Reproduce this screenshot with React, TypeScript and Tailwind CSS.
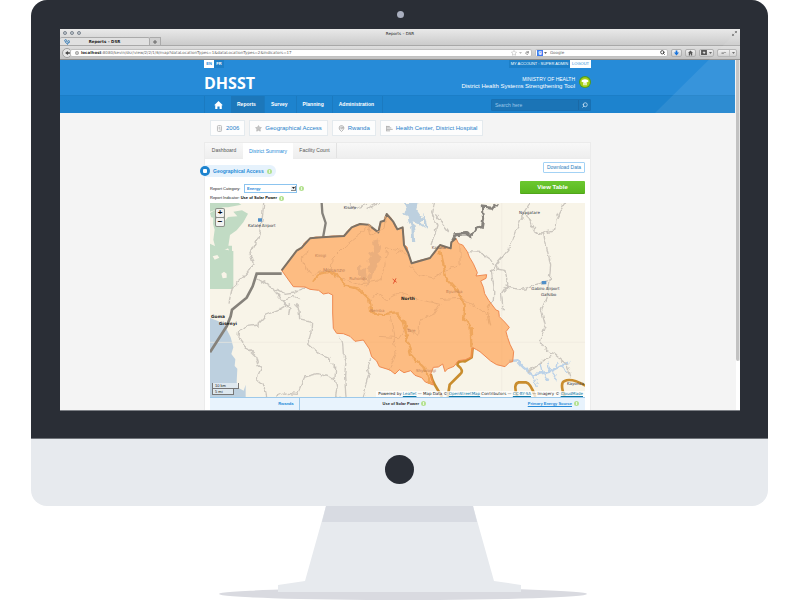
import React from "react";
import { Search, Star, MapPin } from "lucide-react";

const REGION =
  "M215 202 L232 180 L246 160 L260 143 L268 141 L275 134 L283 120 L300 106 L318 102 L335 103 L368 99 L402 99 L412 84 L425 73 L436 67 L450 63 L475 65 L488 78 L505 88 L508 70 L512 56 L523 53 L530 33 L541 42 L549 55 L556 73 L562 79 L578 73 L581 100 L582 126 L591 132 L595 151 L605 181 L630 172 L660 165 L674 150 L690 126 L706 134 L722 136 L724 118 L738 106 L746 122 L758 126 L772 146 L778 162 L790 182 L802 209 L798 219 L830 215 L828 226 L812 234 L820 253 L824 272 L836 292 L858 321 L866 324 L868 341 L884 357 L898 373 L888 386 L893 404 L900 424 L911 446 L908 476 L898 478 L885 491 L860 485 L842 474 L810 446 L800 440 L788 434 L785 463 L766 470 L745 473 L732 490 L712 498 L705 506 L698 483 L685 492 L670 493 L662 513 L668 535 L670 546 L646 537 L635 524 L615 517 L602 503 L582 509 L568 500 L555 513 L540 501 L508 491 L500 474 L485 461 L478 438 L460 411 L435 415 L420 400 L400 392 L380 391 L370 376 L368 330 L368 276 L355 270 L340 273 L326 262 L300 259 L285 252 L250 251 Z";

function Info() {
  return (
    <span className="flex h-[5px] w-[5px] shrink-0 items-center justify-center rounded-full bg-[#b4e191]">
      <span className="h-[3px] w-px bg-[#e8f8dc]" />
    </span>
  );
}

function ToolButton({ label, children }: { label: string; children: React.ReactNode }) {
  return (
    <button
      aria-label={label}
      className="flex h-2 items-center justify-center gap-[2px] rounded-[2px] border border-[#b0b0b0] bg-gradient-to-b from-[#f0f0f0] to-[#cfcfcf] px-[1px] text-[#666]"
    >
      {children}
    </button>
  );
}

function Caret() {
  return (
    <svg viewBox="0 0 6 4" className="h-[2px] w-[3px]">
      <path d="M0 0h6L3 4z" fill="currentColor" />
    </svg>
  );
}

function BrowserChrome() {
  return (
    <div className="bg-gradient-to-b from-[#e9e9e9] via-[#cccccc] to-[#c4c4c4] font-['DejaVu_Sans',sans-serif] text-[4px] leading-[5px] text-[#444]">
      <div className="grid h-2 grid-cols-[1fr_auto_1fr] items-center px-[3px]">
        <div className="flex gap-[3px]">
          {["Close", "Minimise", "Zoom"].map((n) => (
            <button key={n} aria-label={n} className="h-1 w-1 rounded-full border border-[#7d868f] bg-[#c3cad1]" />
          ))}
        </div>
        <span className="text-[#222]">Reports – DSR</span>
        <svg viewBox="0 0 12 12" className="h-[5px] w-[5px] justify-self-end" fill="none" stroke="#777" strokeWidth="2">
          <path d="M7 1h4v4M11 1L7 5M1 7v4h4M1 11l4-4" />
        </svg>
      </div>
      <div className="flex h-[9px] items-end border-b border-[#a8a8a8]">
        <div className="grid h-2 w-[90px] grid-cols-[1fr_auto_1fr] items-center rounded-t-[2px] border-r border-t border-[#aaa] bg-[#e0e0e0] px-1">
          <svg viewBox="0 0 18 18" className="h-[6px] w-[6px]" fill="none" stroke="#3d80b8" strokeWidth="3">
            <circle cx="5" cy="5" r="3" />
            <path d="M5 9c0 6 8 6 8 1" />
            <circle cx="14" cy="8" r="3" />
            <path d="M10 17l3-3" />
          </svg>
          <span className="font-bold text-[#222]">Reports – DSR</span>
        </div>
        <button aria-label="New tab" className="flex h-2 w-[11px] items-center justify-center border-r border-t border-[#aaa] bg-[#cfcfcf]">
          <svg viewBox="0 0 8 8" className="h-[4px] w-[4px]" stroke="#666" strokeWidth="2">
            <path d="M4 0v8M0 4h8" />
          </svg>
        </button>
      </div>
      <div className="flex h-[14px] items-center gap-[3px] border-b border-[#8b8b8b] bg-gradient-to-b from-[#dedede] to-[#c2c2c2] pl-[2px] pr-[3px]">
        <button aria-label="Back" className="-mr-[5px] flex h-[10px] w-[10px] items-center justify-center rounded-full border border-[#a0a0a0] bg-[#e6e6e6]">
          <svg viewBox="0 0 12 10" className="h-1 w-[5px]">
            <path d="M0 5L7 0v3h5v4H7v3z" fill="#444" />
          </svg>
        </button>
        <label className="flex h-[8px] flex-1 items-center rounded-[2px] border border-[#c0c0c0] bg-white pl-[4px] pr-[2px]">
          <svg viewBox="0 0 12 12" className="mr-[2px] h-1 w-1 shrink-0" fill="none" stroke="#999" strokeWidth="2">
            <circle cx="6" cy="6" r="5" />
            <path d="M1 6h10M6 1v10" />
          </svg>
          <span className="font-bold text-[#333]">localhost</span>
          <input
            aria-label="Address"
            className="min-w-0 flex-1 bg-transparent text-[#666] outline-none"
            defaultValue=":8080/kevin/dsr/view/2/2/1/6/map?dataLocationTypes=1&dataLocationTypes=2&indicators=17"
          />
          <Star className="mr-[2px] h-[6px] w-[6px] text-[#aaa]" />
          <span className="mr-[3px] flex text-[#bbb]"><Caret /></span>
          <svg viewBox="0 0 12 12" className="h-1 w-1" fill="none" stroke="#666" strokeWidth="2">
            <path d="M10 8A4 4 0 1 1 9 3M11 0v5H6" />
          </svg>
        </label>
        <label className="flex h-[8px] w-[133px] items-center rounded-[2px] border border-[#c0c0c0] bg-white px-[1px]">
          <span className="flex h-[6px] w-[6px] items-center justify-center bg-[#3f7bf0] text-[5px] font-bold text-white">g</span>
          <span className="mx-[1px] flex text-[#666]"><Caret /></span>
          <input aria-label="Web search" placeholder="Google" className="ml-[2px] min-w-0 flex-1 bg-transparent outline-none placeholder:text-[#666]" />
          <Search className="mr-[1px] h-[5px] w-[5px] text-[#333]" strokeWidth={4} />
        </label>
        <ToolButton label="Downloads">
          <svg viewBox="0 0 12 12" className="mx-[1px] h-[6px] w-[5px]"><path d="M4 0h4v5h4l-6 7-6-7h4z" fill="#1672dc" /></svg>
        </ToolButton>
        <ToolButton label="Home page">
          <svg viewBox="0 0 12 12" className="mx-[1px] h-[6px] w-[5px]"><path d="M6 0l6 6h-2v6H7V8H5v4H2V6H0z" fill="#555" /></svg>
        </ToolButton>
        <ToolButton label="Bookmarks">
          <svg viewBox="0 0 14 12" className="h-[5px] w-[6px]"><path fillRule="evenodd" d="M0 0h14v12H0zM7 2L6 5H3l3 2-1 3 2-2 3 2-1-3 2-2H8z" fill="#555" /></svg>
          <Caret />
        </ToolButton>
        <ToolButton label="Tools">
          <svg viewBox="0 0 14 10" className="ml-[1px] h-[4px] w-[7px]"><path d="M2 4h8V2l4 3H8v2H2z" fill="#777" /></svg>
          <span className="h-full w-px bg-[#bbb]" />
          <Caret />
        </ToolButton>
      </div>
    </div>
  );
}

function SiteHeader() {
  const nav = ["Reports", "Survey", "Planning", "Administration"];
  return (
    <header className="bg-[#268bd8] text-white">
      <div className="mx-auto w-[387px] max-w-full">
        <div className="flex h-2 justify-between text-[4px] leading-[8px]">
          <div className="flex">
            <button className="w-[10px] bg-white text-center font-bold text-[#268bd8]">EN</button>
            <button className="w-[10px] bg-[#1c7fc8] text-center font-bold">FR</button>
          </div>
          <div className="flex">
            <a href="#account" className="bg-[#1c7fc8] px-[2px]">MY ACCOUNT : SUPER ADMIN</a>
            <button className="bg-white px-[2px] text-[#268bd8]">LOGOUT</button>
          </div>
        </div>
        <div className="flex h-[27px] items-center justify-between">
          <h1 className="pt-[3px] font-['Open_Sans',sans-serif] text-[16px] font-bold leading-[20px]">DHSST</h1>
          <div className="flex items-center gap-1">
            <div className="pt-[3px] text-right">
              <p className="text-[5px] leading-[6px]">MINISTRY OF HEALTH</p>
              <p className="text-[6px] leading-[8px]">District Health Systems Strengthening Tool</p>
            </div>
            <svg viewBox="0 0 36 36" className="h-3 w-3">
              <circle cx="18" cy="18" r="18" fill="#4f9a1e" />
              <circle cx="18" cy="19" r="15" fill="#a5cf16" />
              <path d="M7 16c2-8 20-8 22 0l-4 3-2-2v11h-4v-8h-2v8h-4V17l-2 2z" fill="#fff" />
            </svg>
          </div>
        </div>
      </div>
      <div className="border-t border-[#1b7ec7] bg-[#1d83ce]">
        <div className="mx-auto flex w-[387px] max-w-full items-center justify-between">
          <nav className="flex h-[17px] border-l border-[#1b7ac0]">
            <a href="#home" aria-label="Home" className="flex w-[26px] items-center justify-center">
              <svg viewBox="0 0 24 22" className="h-2 w-[9px]">
                <path d="M12 0l12 12h-3v10h-6v-7H9v7H3V12H0z" fill="#fff" />
              </svg>
            </a>
            {nav.map((n, i) => (
              <a
                key={n}
                href={"#" + n.toLowerCase()}
                className={
                  "border-r border-[#1b7ac0] pl-[6px] pr-2 text-[5px] font-bold leading-[17px] " +
                  (i === 0 ? "bg-[#1c77ba]" : "")
                }
              >
                {n}
              </a>
            ))}
          </nav>
          <form className="flex h-3 w-[100px] items-center rounded-[1px] border border-[#1870b3] bg-[#1b74b6]">
            <input aria-label="Search" placeholder="Search here" className="min-w-0 flex-1 bg-transparent pl-[3px] text-[5px] leading-[8px] outline-none placeholder:text-[#9cc8ea]" />
            <button type="button" aria-label="Search" className="flex h-full w-3 items-center justify-center border-l border-[#1a69a6]">
              <Search className="h-[6px] w-[6px] -scale-x-100 text-[#cfe6f7]" strokeWidth={3} />
            </button>
          </form>
        </div>
      </div>
    </header>
  );
}

function Filters() {
  const items = [
    {
      text: "2006",
      icon: (
        <svg viewBox="0 0 20 24" className="h-[7px] w-[7px]" fill="none" stroke="#b3b3b3" strokeWidth="3">
          <rect x="3" y="2" width="14" height="20" rx="3" />
          <path d="M7 8h6M7 13h6M10 17h4" />
        </svg>
      ),
    },
    { text: "Geographical Access", icon: <Star className="h-[7px] w-[7px] fill-[#c4c4c4] text-[#b3b3b3]" /> },
    { text: "Rwanda", icon: <MapPin className="h-[7px] w-[7px] text-[#a8a8a8]" strokeWidth={3} /> },
    {
      text: "Health Center, District Hospital",
      icon: (
        <svg viewBox="0 0 24 20" className="h-[7px] w-[7px]" stroke="#aaa" strokeWidth="3">
          <path d="M1 1v18M1 3h12M1 8h17M1 13h22M1 18h13" />
        </svg>
      ),
    },
  ];
  return (
    <div className="flex gap-1 px-[6px] pb-[6px] pt-[7px]">
      {items.map((it) => (
        <button key={it.text} className="flex h-4 items-center gap-[3px] border border-[#e4eaee] bg-[#fdfdfd] px-[5px] text-[6px] leading-[8px] text-[#1f7fca]">
          {it.icon}
          {it.text}
        </button>
      ))}
    </div>
  );
}

function RegionMap() {
  return (
    <div className="relative h-[194px] overflow-hidden bg-[#f8f4e8]">
      <svg viewBox="0 0 1125 582" preserveAspectRatio="xMidYMid slice" className="h-full w-full" role="img" aria-label="Map of the North region, Rwanda">
        <defs>
          <filter id="rugged" x="0" y="0" width="1125" height="582" filterUnits="userSpaceOnUse">
            <feTurbulence type="fractalNoise" baseFrequency="0.05" numOctaves="2" seed="4" />
            <feDisplacementMap in="SourceGraphic" scale="18" xChannelSelector="R" yChannelSelector="G" />
          </filter>
        </defs>
        <g fill="#c1dbc4">
          <path d="M0 30l14-8 20 8-8 22 14 8 14-18 28-2-12-14 26-4 18 10-14 26-20 24-20 14-6 40-22 10-14-6-8-30 4-30z" />
          <path d="M0 0h86l8 5-40 8H40L0 26zM0 122l34 16 36 6v114H0zM50 128h16v30z" />
          <path d="M0 42l10 2-2 50-8-8z" fill="#f8f4e8" />
          <path d="M34 212l8-6 8 6v12l-12 2zM8 160l14-4 6 8-14 6z" fill="#f8f4e8" />
        </g>
        <path d="M0 345l22 8 20 10 20 40 8 30-6 20 12 16-2 20 8 8-2 40 6 18 15 8 6-18v37H0z" fill="#bdd0df" />
        <path d="M0 418h1125M875 0v582" stroke="#efeade" strokeWidth="2" />
        <g filter="url(#rugged)">
          <g fill="#bdd0df">
            <path d="M582 0h42l-6 18 14 20 14 8-14 10 14 20-16-10-22-10 6 32 2 28-10-4-2-36-8-20-4-20-14-6 14-8z" />
            <path d="M642 30l12 50-12-12z" />
          </g>
          <g fill="none" stroke="#bcd2e8">
            <path d="M900 474l20-2 18 20 28 22 30-4 30-8 40-20 12-4" strokeWidth="7" />
            <path d="M966 514l16 38M996 510l-6-30M1000 506l20 30M980 512l-16 10M1055 488l20 20M1020 502l-10-20M1020 502l22 30M1040 495l4-18" strokeWidth="4" />
          </g>
          <g fill="none" stroke="#cbc6be" strokeWidth="4" strokeLinejoin="round">
            <path d="M161 0l-5 56-12 50-24 46 10 30-30 40-33 30-10 50" />
            <path d="M140 228l24 14 30 18 30 14 30-4 34-20M190 260l30 34 30-14 20 10M220 294l20 20-4 22" />
            <path d="M240 302l-34 20-36 14-28 30-30 4-26 12-2 20 24 30 28 26 8 30 10 10-14 30 22 20 8 34" />
            <path d="M257 300l10 20 2 30 36 8-2 30-10 36 30 26 30 10 10 20 14 14-2 30 6 30-4 28 24 6 4 14" />
            <path d="M192 582l30-12 40 4 12-30 10-22 40-10 50 16" />
            <path d="M388 400l10 22 2 30 8 20-4 50 4 60M482 466l-10 24 6 30-14 50-4 12" />
            <path d="M670 0l-5 30 16 40-10 30-8 26M676 34l40 50" />
            <path d="M960 0l-20 30-24 60-20 50-30 34-22 30 8 48-2 38-18 30 10 50" />
            <path d="M950 34l24 50 20 6 40-10 4-30 26-50M1000 88l14 60 8 40-4 40-10 60-14 34 12 46-18 48 20 26 24 10 40 34 10 34" />
            <path d="M772 146l40 2 30 20 18 30 24 4 10 40-20 30 6 50" />
            <path d="M886 252l50 8 50-18 26-6" />
            <path d="M950 506l30-16 24-20 20-10" />
            <path d="M420 0l12 18 36-14M470 20l34-20" />
          </g>
        </g>
        <g fill="none" stroke="#c98d2e" strokeWidth="8" strokeLinejoin="round">
          <path d="M788 434l-3 29-20 12q-26-2-22 12 20 16 8 26l-32 32-6 37M662 513q4 18 12 32l22 37" />
          <path d="M922 582q-14-40 4-44h22q14 2 28 44M1064 582q-16-44 0-48 20-10 62 14" />
        </g>
        <path d="M0 448l50-78 12-30 4-20 44-36 18-34 12-38h75" fill="none" stroke="#86827b" strokeWidth="8" />
        <path d="M335 0l2 30 10 30-8 44" fill="none" stroke="#86827b" strokeWidth="7" />
        <path d="M725 116l10-20 30-4 16 8 18-24 18-4 4-24-4-36 30 4 10-14" fill="none" stroke="#86827b" strokeWidth="9" filter="url(#rugged)" />
        <path d={REGION} fill="#ff9b45" fillOpacity="0.63" stroke="#ef8a52" strokeWidth="3" strokeLinejoin="round" />
        <path d="M215 202l45-59 15-9 25-28 35-3 67-4 23-26 25-10 25 2 30 23 7-32 11-3 7-20 19 22 13 24 16-6 4 53 13 25 10 30 55-16 30-39 32 10 2-18 14-12" fill="none" stroke="#7d7164" strokeWidth="6" strokeLinejoin="round" />
        <g filter="url(#rugged)">
          <path fill="#dfa679" opacity="0.6" d="M486 116l20-4-2 20 12-8-8 30 10 10-14 20-14 22-8 30-16 18 6-30 8-20-12-10 16-10-12-10 10-14-8-10 16-6zM444 182l10 4v30l-10 4zM450 210l16-20 4 30-10 20z" />
          <path
            fill="none"
            stroke="#eaac77"
            strokeWidth="3"
            strokeLinejoin="round"
            d="M296 146l-20 16 6 30 28 20 54-14 2-30 40-40 50-40 20-20 6 28 40-20 4-34M364 200l20 24 60 20 60-10 20-40 6-60 36 6M555 150l20-8 20 20M600 185l30 30 40 10 30-20 50-20v-60M476 300l24-30 30 20 40-20 60 20 60 14-20 30-40 20-4 40-40-20-20 30-60-4M540 330l10 60 8 60-20 50M690 290l60-4 50 26 40 30"
          />
          <g fill="none" stroke="#efa65b" strokeWidth="7" strokeLinejoin="round">
            <path d="M310 232l20-20 26-6 28 12 22 30 40 10 32 30 6 40 34 6 40-6 24 30 12 60 10 40 36 34 22 50" />
            <path d="M690 140l12 50 6 34 40 46 16 36-4 34 22 30 2 60" />
          </g>
        </g>
        <g fill="#4f8fc8"><path d="M144 46h12v10h-12zM995 234h14v10h-14z" /></g>
        <g className="font-['DejaVu_Sans',sans-serif] text-[12px]" fill="#2f3140">
          <text x="401" y="18">Kisoro</text>
          <text x="114" y="73">Katale Airport</text>
          <text x="927" y="34">Nyagatare</text>
          <text x="964" y="261">Gabiro Airport</text>
          <text x="993" y="280">Gatsibo</text>
          <text x="1071" y="547">Kayonza</text>
          <text x="665" y="139" fill="#6e5a50">Katuna</text>
        </g>
        <g className="font-['DejaVu_Sans',sans-serif] text-[12px]" fill="#bd8159">
          <text x="315" y="161">Kinigi</text>
          <text x="339" y="208" className="text-[15px]">Musanze</text>
          <text x="418" y="230">Ruhondo</text>
          <text x="480" y="328">Nemba</text>
          <text x="592" y="386">Tare</text>
          <text x="618" y="506">Shyorongi</text>
          <text x="708" y="270">Byumba</text>
        </g>
        <path d="M548 228l12 10M558 226l-8 16" stroke="#e3532f" strokeWidth="3" />
        <g className="font-['DejaVu_Sans',sans-serif] text-[13px] font-bold" fill="#222">
          <text x="3" y="345">Goma</text>
          <text x="27" y="367">Gisenyi</text>
          <text x="573" y="290">North</text>
        </g>
      </svg>
      <div className="absolute left-[5px] top-[5px] flex flex-col gap-px rounded-[2px] bg-[#8c9088] p-px">
        {["+", "−"].map((s) => (
          <button key={s} aria-label={s === "+" ? "Zoom in" : "Zoom out"} className="flex h-2 w-2 items-center justify-center rounded-[1px] bg-[#f2f2f0] text-[8px] font-bold leading-[8px] text-black">
            {s}
          </button>
        ))}
      </div>
      <div className="absolute bottom-[2px] left-[2px] text-[4px] leading-[5px] text-[#222]">
        <div className="w-[27px] border-x border-b border-[#777] bg-white/50 pl-[2px]">10 km</div>
        <div className="w-[22px] border-x border-b border-[#777] bg-white/50 pl-[2px]">5 mi</div>
      </div>
      <p className="absolute bottom-0 right-0 whitespace-nowrap bg-white/75 px-[2px] font-['DejaVu_Sans',sans-serif] text-[4px] leading-[6px] text-[#222]">
        Powered by <a className="text-[#0b78a8] underline" href="#leaflet">Leaflet</a> — Map Data ©{" "}
        <a className="text-[#0b78a8] underline" href="#osm">OpenStreetMap</a> Contributors —{" "}
        <a className="text-[#0b78a8] underline" href="#licence">CC-BY-SA</a> — Imagery ©{" "}
        <a className="text-[#0b78a8] underline" href="#cloudmade">CloudMade</a>
      </p>
    </div>
  );
}

function Panel() {
  return (
    <section className="border-x border-t border-[#ebebeb] bg-white">
      <div role="tablist" className="flex h-4 border-b border-[#ececec] bg-gradient-to-b from-[#f8f8f8] to-[#eeeeee] text-[5px] leading-[15px] text-[#555]">
        <button role="tab" className="h-[15px] w-[38px]">Dashboard</button>
        <button role="tab" aria-selected="true" className="h-4 w-[50px] bg-white text-[#268bd8]">District Summary</button>
        <button role="tab" className="h-[15px] w-[44px] border-r border-[#e2e2e2]">Facility Count</button>
      </div>
      <div className="px-[5px]">
        <div className="flex items-start justify-between pt-[3px]">
          <div className="pt-[3px]">
            <h2 className="-ml-[10px] flex h-3 w-[76px] items-center gap-[3px] rounded-full bg-[#e6f2fc] text-[5px] font-bold leading-[6px] text-[#268bd8]">
              <span className="flex h-[10px] w-[10px] shrink-0 items-center justify-center rounded-full bg-[#1d83ce]">
                <span className="h-[4px] w-[4px] rounded-[1px] bg-white" />
              </span>
              <span className="whitespace-nowrap">Geographical Access</span>
              <Info />
            </h2>
            <div className="mt-[7px] flex h-[9px] items-center gap-[2px] text-[4px] leading-[7px]">
              <label htmlFor="category" className="w-[32px] whitespace-nowrap text-[#222]">Report Category:</label>
              <span className="relative flex">
                <select id="category" defaultValue="Energy" className="h-[9px] w-[53px] appearance-none border border-[#8cc4ef] bg-white pl-[2px] font-bold text-[#268bd8]">
                  <option>Energy</option>
                </select>
                <span className="pointer-events-none absolute right-[1px] top-[2px] flex h-[5px] w-[5px] items-center justify-center border-b border-r border-[#888] bg-[#eee] text-[#222]">
                  <Caret />
                </span>
              </span>
              <Info />
            </div>
            <p className="flex h-[10px] items-center gap-[2px] text-[4px] leading-[6px] text-[#222]">
              <span>Report Indicator: <b className="text-black">Use of Solar Power</b></span>
              <Info />
            </p>
          </div>
          <div className="flex flex-col items-end gap-2">
            <button className="h-[11px] w-[42px] rounded-[1px] border border-[#a3d2f5] bg-white text-[5px] leading-[9px] text-[#2b80bd]">Download Data</button>
            <button className="h-[13px] w-[65px] rounded-[1px] border-b border-[#51a51b] bg-gradient-to-b from-[#6cc830] to-[#5ab71f] text-[6px] font-bold leading-[12px] text-white">View Table</button>
          </div>
        </div>
        <RegionMap />
        <table className="w-full table-fixed border-t border-[#9dc9ea] bg-[#e8f3fd] text-[4px] leading-[5px]">
          <thead>
            <tr className="h-3">
              <th className="w-[89px] border-r border-[#9dc9ea] pr-[5px] text-right text-[#268bd8]">Rwanda</th>
              <th className="text-[#222]">
                <span className="flex items-center justify-end gap-[2px] pr-4">Use of Solar Power <Info /></span>
              </th>
              <th>
                <span className="flex items-center justify-end gap-[2px] pr-[6px]">
                  <a href="#source" className="text-[#268bd8] underline">Primary Energy Source</a>
                  <Info />
                </span>
              </th>
            </tr>
          </thead>
        </table>
      </div>
    </section>
  );
}

export default function App() {
  return (
    <div className="min-h-screen bg-white pl-[31px] pr-8 font-['Liberation_Sans',Arial,sans-serif]">
      <div className="rounded-t-2xl bg-[#2a2e36] pb-[27px] pl-[29px] pr-7">
        <div className="flex h-[29px] items-center justify-center">
          <span className="h-[7px] w-[7px] rounded-full bg-[#a9afbf]" />
        </div>
        <div className="relative overflow-hidden border-b border-[#7c7f85] bg-[#f4f4f4]">
          <BrowserChrome />
          <div className="flex">
            <div className="min-w-0 flex-1">
              <SiteHeader />
              <main className="mx-auto w-[387px] max-w-full">
                <Filters />
                <Panel />
              </main>
            </div>
            <div className="w-[5px] bg-[#f4f4f4] pl-px">
              <div className="h-full bg-white">
                <div className="h-[86%] rounded-b-[2px] border-r border-[#e0e0e0] bg-[#c2c2c2]" />
              </div>
            </div>
          </div>
          <svg viewBox="0 0 85 84" className="pointer-events-none absolute right-0 top-0 h-[84px] w-[85px]">
            <path d="M85 0L0 84h85z" fill="#fff" opacity="0.08" />
          </svg>
        </div>
      </div>
      <div className="flex h-[68px] justify-center rounded-b-2xl border-t border-[#70747a] bg-[#e7eaee] pt-4">
        <span className="h-[29px] w-[29px] rounded-full bg-[#2a2e36]" />
      </div>
      <svg viewBox="0 0 374 94" className="mx-auto block h-[94px] w-[374px] max-w-full">
        <ellipse cx="190" cy="88" rx="184" ry="6" fill="#d9dae0" />
        <path d="M113 0h147l21 75 27 4v7H65v-7l27-4z" fill="#e7eaee" />
        <path d="M113 0h147l4 16H109z" fill="#d8dbe2" />
      </svg>
    </div>
  );
}
